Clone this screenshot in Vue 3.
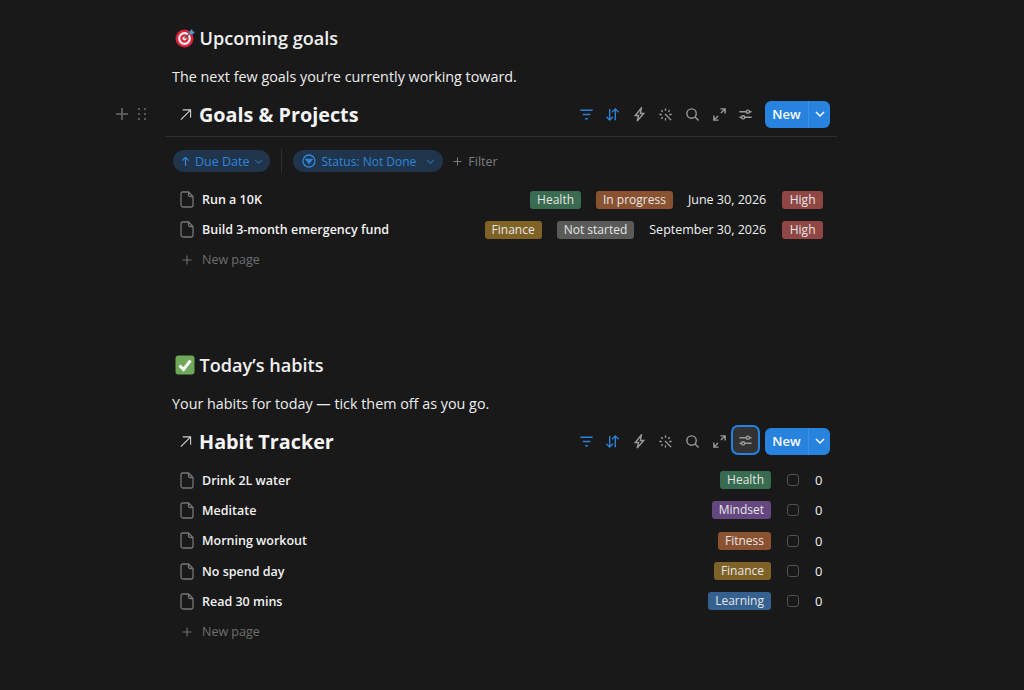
<script setup>
const goals = [
  { name: 'Run a 10K', area: 'Health', areaColor: 'green', status: 'In progress', statusColor: 'orange', date: 'June 30, 2026' },
  { name: 'Build 3-month emergency fund', area: 'Finance', areaColor: 'yellow', status: 'Not started', statusColor: 'gray', date: 'September 30, 2026' },
]
const habits = [
  { name: 'Drink 2L water', tag: 'Health', color: 'green' },
  { name: 'Meditate', tag: 'Mindset', color: 'purple' },
  { name: 'Morning workout', tag: 'Fitness', color: 'orange' },
  { name: 'No spend day', tag: 'Finance', color: 'yellow' },
  { name: 'Read 30 mins', tag: 'Learning', color: 'blue' },
]
const tools = ['filter', 'sort', 'bolt', 'wand', 'search', 'expand', 'sliders']
</script>

<template>
  <main class="page">
    <section class="block first">
      <h3 class="heading">
        <svg class="emoji" viewBox="0 0 20 20">
          <circle cx="9.5" cy="10.5" r="9" fill="#d8243c" />
          <circle cx="9.5" cy="10.5" r="6.4" fill="#f4f0f0" />
          <circle cx="9.5" cy="10.5" r="4.2" fill="#d8243c" />
          <circle cx="9.5" cy="10.5" r="2" fill="#f4f0f0" />
          <path d="M9.5 10.5 16 4" stroke="#555" stroke-width="1.2" />
          <path d="M14.5 3.5 17 1l.6 2.2L20 4l-2.600 2.400-2.600-.4z" fill="#4a9ad8" />
        </svg>
        Upcoming goals
      </h3>
      <p class="intro">The next few goals you’re currently working toward.</p>

      <div class="view-head ruled">
        <div class="handles">
          <svg viewBox="0 0 14 14" class="plus-big"><path d="M7 1v12M1 7h12" /></svg>
          <svg viewBox="0 0 10 14" class="grip">
            <circle cx="2" cy="2" r="1.1" /><circle cx="8" cy="2" r="1.1" />
            <circle cx="2" cy="7" r="1.1" /><circle cx="8" cy="7" r="1.1" />
            <circle cx="2" cy="12" r="1.1" /><circle cx="8" cy="12" r="1.1" />
          </svg>
        </div>
        <div class="view-title">
          <svg viewBox="0 0 14 14" class="arrow"><path d="M2 12.500 12.500 2M4 2h8.500v8.500" /></svg>
          <span>Goals &amp; Projects</span>
        </div>
        <div class="tools">
          <span v-for="t in tools" :key="t" class="tool" :class="{ on: t === 'filter' || t === 'sort' }">
            <svg viewBox="0 0 16 16">
              <path v-if="t === 'filter'" d="M1.500 3.500h13M4 8h8M6.500 12.500h3" />
              <path v-else-if="t === 'sort'" d="M5 2v12M1.500 10.500 5 14l3.500-3.500M11 14V2M7.500 5.500 11 2l3.500 3.500" />
              <path v-else-if="t === 'bolt'" d="M10 1 3.500 9h3.500l-1.500 6L12.500 7H9z" />
              <path v-else-if="t === 'wand'" d="M7.500 7.500l6.500 6.500M8 1.500v2.500M1.500 8H4M3.500 3.500 5 5M12.500 3.500 11 5M3.500 12.500 5 11M12 8h2.500M8 12v2.500" />
              <g v-else-if="t === 'search'"><circle cx="7" cy="7" r="5" /><path d="M10.700 10.700 14.500 14.500" /></g>
              <path v-else-if="t === 'expand'" d="M2 14 6.500 9.500M9.500 6.500 14 2M9 2h5v5M2 9v5h5" />
              <g v-else><path d="M1.500 5h13M1.500 11h13" /><circle cx="10.500" cy="5" r="1.700" fill="#1a1a1a" /><circle cx="5.500" cy="11" r="1.700" fill="#1a1a1a" /></g>
            </svg>
          </span>
          <div class="new-btn">
            <span class="new-label">New</span>
            <span class="new-more"><svg viewBox="0 0 12 12"><path d="M2 4l4 4 4-4" /></svg></span>
          </div>
        </div>
      </div>

      <div class="filters">
        <span class="pill">
          <svg viewBox="0 0 12 12" class="pill-icon small"><path d="M6 11V1.500M2.500 5 6 1.500 9.500 5" /></svg>
          Due Date
          <svg viewBox="0 0 10 10" class="caret"><path d="M1.500 3.500 5 7l3.500-3.500" /></svg>
        </span>
        <span class="sep"></span>
        <span class="pill status">
          <svg viewBox="0 0 14 14" class="pill-icon"><circle cx="7" cy="7" r="6" /><path d="M4 5.500h6L7 9.500z" fill="currentColor" /></svg>
          Status: Not Done
          <svg viewBox="0 0 10 10" class="caret"><path d="M1.500 3.500 5 7l3.500-3.500" /></svg>
        </span>
        <span class="add-filter">
          <svg viewBox="0 0 10 10"><path d="M5 .5v9M.5 5h9" /></svg>
          Filter
        </span>
      </div>

      <div v-for="g in goals" :key="g.name" class="row">
        <svg viewBox="0 0 14 17" class="doc"><path d="M2.500 1h6L13 5.500V14a2 2 0 0 1-2 2H3a2 2 0 0 1-2-2V2.500A1.500 1.500 0 0 1 2.500 1zM8.500 1v3a1.500 1.500 0 0 0 1.500 1.500h3" /></svg>
        <span class="row-name">{{ g.name }}</span>
        <div class="cells">
          <span class="tag" :class="g.areaColor">{{ g.area }}</span>
          <span class="tag" :class="g.statusColor">{{ g.status }}</span>
          <span class="date">{{ g.date }}</span>
          <span class="tag red">High</span>
        </div>
      </div>
      <div class="row new-page">
        <svg viewBox="0 0 10 10" class="new-plus"><path d="M5 .5v9M.5 5h9" /></svg>
        <span>New page</span>
      </div>
    </section>

    <section class="block second">
      <h3 class="heading">
        <svg class="emoji" viewBox="0 0 20 20">
          <rect x="0.500" y="0.500" width="19" height="19" rx="3" fill="#6fa857" />
          <path d="M4.500 10.500 8.500 14.500 15.500 5.500" fill="none" stroke="#fff" stroke-width="3" />
        </svg>
        Today’s habits
      </h3>
      <p class="intro">Your habits for today — tick them off as you go.</p>

      <div class="view-head">
        <div class="view-title">
          <svg viewBox="0 0 14 14" class="arrow"><path d="M2 12.500 12.500 2M4 2h8.500v8.500" /></svg>
          <span>Habit Tracker</span>
        </div>
        <div class="tools">
          <span v-for="t in tools" :key="t" class="tool" :class="{ on: t === 'filter' || t === 'sort', focus: t === 'sliders' }">
            <svg viewBox="0 0 16 16">
              <path v-if="t === 'filter'" d="M1.500 3.500h13M4 8h8M6.500 12.500h3" />
              <path v-else-if="t === 'sort'" d="M5 2v12M1.500 10.500 5 14l3.500-3.500M11 14V2M7.500 5.500 11 2l3.500 3.500" />
              <path v-else-if="t === 'bolt'" d="M10 1 3.500 9h3.500l-1.500 6L12.500 7H9z" />
              <path v-else-if="t === 'wand'" d="M7.500 7.500l6.500 6.500M8 1.500v2.500M1.500 8H4M3.500 3.500 5 5M12.500 3.500 11 5M3.500 12.500 5 11M12 8h2.500M8 12v2.500" />
              <g v-else-if="t === 'search'"><circle cx="7" cy="7" r="5" /><path d="M10.700 10.700 14.500 14.500" /></g>
              <path v-else-if="t === 'expand'" d="M2 14 6.500 9.500M9.500 6.500 14 2M9 2h5v5M2 9v5h5" />
              <g v-else><path d="M1.500 5h13M1.500 11h13" /><circle cx="10.500" cy="5" r="1.700" fill="#333" /><circle cx="5.500" cy="11" r="1.700" fill="#333" /></g>
            </svg>
          </span>
          <div class="new-btn">
            <span class="new-label">New</span>
            <span class="new-more"><svg viewBox="0 0 12 12"><path d="M2 4l4 4 4-4" /></svg></span>
          </div>
        </div>
      </div>

      <div class="habit-list">
        <div v-for="h in habits" :key="h.name" class="row habit">
          <svg viewBox="0 0 14 17" class="doc"><path d="M2.500 1h6L13 5.500V14a2 2 0 0 1-2 2H3a2 2 0 0 1-2-2V2.500A1.500 1.500 0 0 1 2.500 1zM8.500 1v3a1.500 1.500 0 0 0 1.500 1.500h3" /></svg>
          <span class="row-name">{{ h.name }}</span>
          <div class="cells">
            <span class="tag" :class="h.color">{{ h.tag }}</span>
            <span class="check"></span>
            <span class="count">0</span>
          </div>
        </div>
        <div class="row habit new-page">
          <svg viewBox="0 0 10 10" class="new-plus"><path d="M5 .5v9M.5 5h9" /></svg>
          <span>New page</span>
        </div>
      </div>
    </section>
  </main>
</template>

<style>
html, body {
  margin: 0;
  background: #191919;
}
</style>

<style scoped>
.page {
  width: 672px;
  height: 690px;
  margin-left: 165px;
  font-family: "Open Sans", "Noto Sans", sans-serif;
  color: #f0f0f0;
}
.block.first { padding-top: 20px; }
.block.second { padding-top: 72.500px; }

.heading {
  display: flex;
  align-items: center;
  gap: 4.500px;
  height: 36px;
  margin: 0;
  padding-left: 10px;
  font-size: 18.100px;
  font-weight: 600;
  color: #f0f0f0;
}
.emoji { width: 20px; height: 20px; flex: none; margin-top: -1px; }
.intro {
  height: 30px;
  margin: 6px 0 7px;
  padding-left: 7px;
  font-size: 14.350px;
  line-height: 30px;
  color: #ededed;
}

.view-head {
  position: relative;
  display: flex;
  align-items: center;
  justify-content: space-between;
  height: 30px;
  padding: 0 7px 0 14px;
}
.view-head.ruled::after {
  content: "";
  position: absolute;
  left: 0;
  right: 0;
  bottom: -8px;
  height: 1px;
  background: #2f2f2f;
}
.handles {
  position: absolute;
  left: -50px;
  top: 8px;
  display: flex;
  align-items: center;
  gap: 8px;
}
.plus-big { width: 14px; height: 14px; }
.plus-big path { fill: none; stroke: #6b6b6b; stroke-width: 1.500; }
.grip { width: 10px; height: 14px; fill: #6a6a6a; }
.view-title {
  display: flex;
  align-items: center;
  gap: 7px;
  font-size: 19.800px;
  font-weight: 700;
  color: #f5f5f5;
}
.arrow { width: 13px; height: 13px; fill: none; stroke: #cfcfcf; stroke-width: 1.200; }

.tools { display: flex; align-items: center; }
.tool {
  display: flex;
  align-items: center;
  justify-content: center;
  width: 26.600px;
  height: 30px;
  box-sizing: border-box;
  color: #9a9a96;
}
.tool svg {
  width: 15px;
  height: 15px;
  fill: none;
  stroke: currentColor;
  stroke-width: 1.500;
}
.tool.on { color: #2b82d9; }
.tool.focus {
  width: 29px;
  margin: 0 -1.200px 2px;
  border: 2px solid #2383e2;
  border-radius: 7px;
  background: #333;
}
.new-btn {
  display: flex;
  height: 27px;
  margin-left: 6px;
  border-radius: 6px;
  overflow: hidden;
  background: #2783de;
  color: #fff;
  font-size: 13px;
  font-weight: 600;
}
.new-label {
  width: 43px;
  line-height: 27px;
  text-align: center;
}
.new-more {
  display: flex;
  align-items: center;
  justify-content: center;
  width: 21px;
  border-left: 1px solid #3f90e0;
}
.new-more svg { width: 12px; height: 12px; fill: none; stroke: #fff; stroke-width: 1.500; }

.filters {
  display: flex;
  align-items: center;
  height: 24px;
  margin-top: 20px;
  margin-bottom: 11.500px;
  padding-left: 8px;
  font-size: 12.500px;
  color: #2f86dc;
}
.pill {
  display: flex;
  align-items: center;
  gap: 4px;
  height: 22px;
  padding: 0 7px;
  border-radius: 11px;
  background: #20354b;
}
.pill.status { gap: 6px; padding: 0 8px 0 9px; font-size: 12px; font-weight: 500; }
.pill.status .caret { margin-left: 4px; }
.pill-icon { width: 14px; height: 14px; fill: none; stroke: currentColor; stroke-width: 1.300; }
.pill-icon.small { width: 11px; height: 11px; }
.caret { width: 9px; height: 9px; fill: none; stroke: currentColor; stroke-width: 1.100; }
.sep {
  width: 1px;
  height: 24px;
  margin: 0 11px;
  background: #2f2f2f;
}
.add-filter {
  display: flex;
  align-items: center;
  gap: 6px;
  margin-left: 10px;
  font-size: 12.500px;
  color: #7d7d7d;
}
.add-filter svg { width: 9px; height: 9px; fill: none; stroke: #7d7d7d; stroke-width: 1.100; }

.row {
  display: flex;
  align-items: center;
  height: 30px;
  padding: 0 14px 0 15px;
  font-size: 12.500px;
}
.row.habit { height: 30.300px; padding-right: 15px; }
.doc { width: 14px; height: 17px; flex: none; fill: none; stroke: #757575; stroke-width: 1.300; }
.row-name {
  margin-left: 8px;
  font-weight: 600;
  color: #f2f2f2;
}
.cells {
  display: flex;
  align-items: center;
  gap: 15px;
  margin-left: auto;
}
.tag {
  height: 18px;
  padding: 0 7px;
  border-radius: 3px;
  font-size: 12px;
  line-height: 18px;
  color: #e6e6e6;
}
.tag.red { padding: 0 7.500px; margin-left: 1px; }
.green { background: #386b4f; }
.orange { background: #8a5230; }
.yellow { background: #7f6226; }
.gray { background: #5a5a58; }
.red { background: #8f4644; }
.purple { background: #64477f; }
.blue { background: #34618f; }
.date { color: #f0f0f0; }

.check {
  width: 10px;
  height: 10px;
  margin-left: 1px;
  border: 1.500px solid #525252;
  border-radius: 3px;
}
.count { width: 7px; margin-left: 1px; font-size: 13px; text-align: right; color: #f0f0f0; }

.new-page { color: #6f6f6f; }
.new-plus { width: 10px; height: 10px; margin: 0 2px; flex: none; fill: none; stroke: #6f6f6f; stroke-width: 1.100; }
.new-page span { margin-left: 8px; }

.habit-list { margin-top: 9px; }
</style>
